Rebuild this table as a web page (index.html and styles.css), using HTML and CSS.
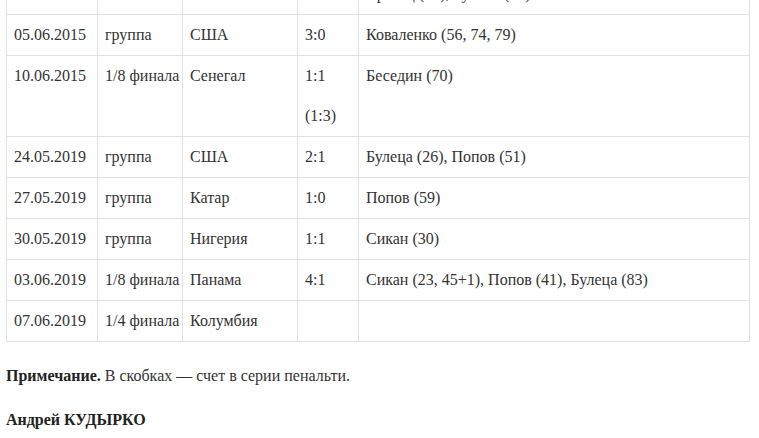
FILE: index.html
```html
<!DOCTYPE html>
<html lang="ru">
<head>
<meta charset="utf-8">
<title>Матчи</title>
<link rel="stylesheet" href="styles.css">
</head>
<body>
<div class="article">
  <table class="matches">
    <colgroup>
      <col class="c-date"><col class="c-stage"><col class="c-rival"><col class="c-score"><col class="c-goals">
    </colgroup>
    <tbody>
      <tr><td>02.06.2015</td><td>группа</td><td>Мьянма</td><td>6:0</td><td>Коваленко (3), Беседин (15, 48),<br>Кравец (12), Зубков (45)</td></tr>
      <tr><td>05.06.2015</td><td>группа</td><td>США</td><td>3:0</td><td>Коваленко (56, 74, 79)</td></tr>
      <tr><td>10.06.2015</td><td>1/8 финала</td><td>Сенегал</td><td>1:1<br>(1:3)</td><td>Беседин (70)</td></tr>
      <tr><td>24.05.2019</td><td>группа</td><td>США</td><td>2:1</td><td>Булеца (26), Попов (51)</td></tr>
      <tr><td>27.05.2019</td><td>группа</td><td>Катар</td><td>1:0</td><td>Попов (59)</td></tr>
      <tr><td>30.05.2019</td><td>группа</td><td>Нигерия</td><td>1:1</td><td>Сикан (30)</td></tr>
      <tr><td>03.06.2019</td><td>1/8 финала</td><td>Панама</td><td>4:1</td><td>Сикан (23, 45+1), Попов (41), Булеца (83)</td></tr>
      <tr><td>07.06.2019</td><td>1/4 финала</td><td>Колумбия</td><td></td><td></td></tr>
    </tbody>
  </table>
  <p class="note"><strong>Примечание.</strong> В скобках — счет в серии пенальти.</p>
  <p class="author"><strong>Андрей КУДЫРКО</strong></p>
</div>
</body>
</html>
```

FILE: styles.css
```css
html, body {
  margin: 0;
  padding: 0;
  background: #fff;
}
body {
  font-family: "Liberation Serif", "Times New Roman", serif;
  font-size: 16px;
  color: #333;
  overflow: hidden;
}
.article {
  padding: 0 6px;
}
.matches {
  border-collapse: collapse;
  table-layout: fixed;
  width: 743px;
  margin: -67px 0 22px 0;
}
.c-date { width: 91px; }
.c-stage { width: 85px; }
.c-rival { width: 115px; }
.c-score { width: 61px; }
.c-goals { width: 391px; }
.matches td {
  border: 1px solid #e1e1e1;
  padding: 0 7px;
  line-height: 40px;
  vertical-align: top;
  white-space: nowrap;
  overflow: hidden;
}
.note, .author {
  margin: 0 0 20px 0;
  line-height: 24px;
}
.note strong, .author strong {
  color: #222;
}
```
